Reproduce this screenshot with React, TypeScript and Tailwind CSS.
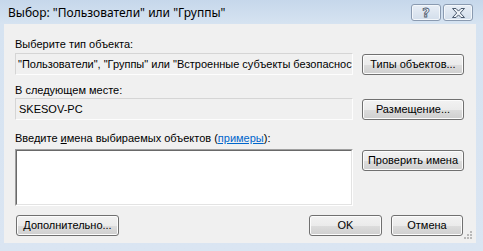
import type { ReactNode } from "react";

const ui = "font-['Liberation_Sans',Arial,sans-serif] text-[11px] leading-[13px] text-black";

function Btn({ children, className = "" }: { children: ReactNode; className?: string }) {
    return (
        <div
            className={`flex h-[21px] items-center justify-center rounded-[3px] border border-[#707070] bg-[linear-gradient(#f2f2f2_0%,#ebebeb_50%,#dddddd_51%,#cfcfcf_100%)] shadow-[inset_0_0_0_1px_#fcfcfc] ${ui} ${className}`}
        >
            {children}
        </div>
    );
}

function ReadBox({ children }: { children: ReactNode }) {
    return (
        <div className="flex h-[22px] w-[338px] items-center overflow-hidden whitespace-nowrap border border-t-[#d5d5d5] border-l-[#d5d5d5] border-b-[#fdfdfd] border-r-[#fdfdfd] bg-[#f0f0f0] pl-[2px]">
            <span className={ui}>{children}</span>
        </div>
    );
}

function CaptionButton({ children }: { children: ReactNode }) {
    return (
        <div className="flex h-[17px] w-[30px] items-center justify-center rounded-[3px] border border-[#8a9ab0] bg-[linear-gradient(#e8eef6,#d3deeb)] shadow-[inset_0_0_0_1px_#f3f7fb]">
            {children}
        </div>
    );
}

export default function App() {
    return (
        <div className="relative h-[251px] w-[483px] overflow-hidden bg-[linear-gradient(#c6d7eb_0px,#d6e3f1_24px,#dae5f2_100%)]">
            {/* title bar */}
            <div className="flex h-[24px] items-start pl-[8px] pr-[10px] pt-[4px]">
                <div className="flex-1 pt-[2px] font-['Noto_Sans',sans-serif] text-[12px] leading-[14px] text-black">
                    Выбор: "Пользователи" или "Группы"
                </div>
                <div className="flex gap-[2px]">
                    <CaptionButton>
                        <span className="font-['DejaVu_Sans',sans-serif] text-[13px] font-bold leading-none text-[#f4f6f9] [-webkit-text-stroke:0.8px_#4b5a6e]">?</span>
                    </CaptionButton>
                    <CaptionButton>
                        <svg width="15" height="10" viewBox="0 0 15 10">
                            <path
                                d="M1.5 0.5h3.5l2.5 2.6 2.5-2.6h3.5l-4.2 4.5 4.2 4.5h-3.5l-2.5-2.6-2.5 2.6h-3.5l4.2-4.5z"
                                fill="#eef2f7"
                                stroke="#4b5a6e"
                                strokeWidth="1"
                                strokeLinejoin="round"
                            />
                        </svg>
                    </CaptionButton>
                </div>
            </div>

            {/* client area */}
            <div className="relative ml-[4px] h-[219px] w-[472px] bg-[#f0f0f0] px-[11px] pt-[14px]">
                <div className={ui}>Выберите тип объекта:</div>
                <div className="mt-[2px] flex items-start gap-[9px]">
                    <ReadBox>"Пользователи", "Группы" или "Встроенные субъекты безопасности"</ReadBox>
                    <Btn className="mt-[1px] w-[102px]">Типы объектов...</Btn>
                </div>

                <div className={`mt-[9px] ${ui}`}>В следующем месте:</div>
                <div className="mt-[1px] flex items-start gap-[9px]">
                    <ReadBox>
                        <span className="pl-[1px]">SKESOV-PC</span>
                    </ReadBox>
                    <Btn className="mt-[1px] w-[102px]">Размещение...</Btn>
                </div>

                <div className={`mt-[12px] ${ui}`}>
                    Введите <span className="underline">и</span>мена выбираемых объектов (
                    <span className="text-[#0066cc] underline">примеры</span>):
                </div>
                <div className="mt-[4px] flex items-start gap-[9px]">
                    <div className="h-[57px] w-[338px] border border-t-[#a0a0a0] border-l-[#a0a0a0] border-b-[#ffffff] border-r-[#ffffff]">
                        <div className="h-full w-full border border-t-[#696969] border-l-[#696969] border-b-[#e3e3e3] border-r-[#e3e3e3] bg-white" />
                    </div>
                    <Btn className="mt-[1px] w-[102px]">Проверить имена</Btn>
                </div>

                <div className="mt-[9px] flex items-start">
                    <Btn className="ml-[1px] w-[103px]">Дополнительно...</Btn>
                    <div className="flex-1" />
                    <Btn className="w-[73px]">OK</Btn>
                    <Btn className="ml-[9px] w-[72px]">Отмена</Btn>
                    <div className="w-[2px]" />
                </div>

                {/* size grip */}
                <svg className="absolute bottom-[3px] right-[3px]" width="9" height="9" viewBox="0 0 9 9">
                    <g fill="#b9b9b9">
                        <rect x="6" y="0" width="2" height="2" />
                        <rect x="3" y="3" width="2" height="2" />
                        <rect x="6" y="3" width="2" height="2" />
                        <rect x="0" y="6" width="2" height="2" />
                        <rect x="3" y="6" width="2" height="2" />
                        <rect x="6" y="6" width="2" height="2" />
                    </g>
                </svg>
            </div>
        </div>
    );
}
